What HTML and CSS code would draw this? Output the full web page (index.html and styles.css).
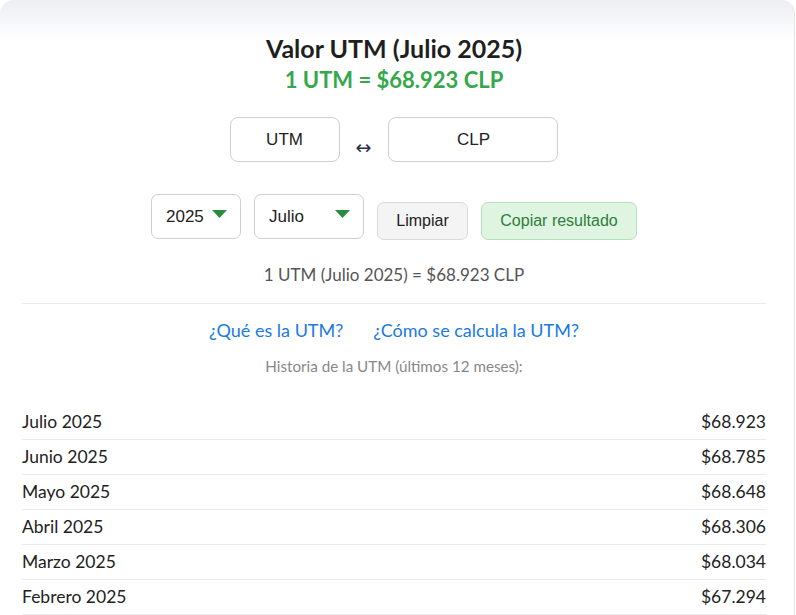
FILE: index.html
```html
<!DOCTYPE html>
<html lang="es">
<head>
<meta charset="utf-8">
<title>Valor UTM</title>
<link rel="stylesheet" href="styles.css">
</head>
<body>
<div class="card">
  <h1 class="title">Valor UTM (Julio 2025)</h1>
  <div class="rate">1 UTM = $68.923 CLP</div>

  <div class="converter">
    <div class="field field-utm">UTM</div>
    <span class="swap">&#8596;</span>
    <div class="field field-clp">CLP</div>
  </div>

  <div class="controls">
    <div class="select select-year"><span>2025</span><svg class="caret" width="15" height="8" viewBox="0 0 15 8"><path d="M0 0H15L7.5 8Z" fill="#2a8a3e"/></svg></div>
    <div class="select select-month"><span>Julio</span><svg class="caret" width="15" height="8" viewBox="0 0 15 8"><path d="M0 0H15L7.5 8Z" fill="#2a8a3e"/></svg></div>
    <button class="btn btn-clear">Limpiar</button>
    <button class="btn btn-copy">Copiar resultado</button>
  </div>

  <div class="result">1 UTM (Julio 2025) = $68.923 CLP</div>
  <hr class="divider">

  <div class="links">
    <a href="#" class="link">¿Qué es la UTM?</a>
    <a href="#" class="link">¿Cómo se calcula la UTM?</a>
  </div>
  <div class="history-title">Historia de la UTM (últimos 12 meses):</div>

  <ul class="history">
    <li class="row"><span>Julio 2025</span><span>$68.923</span></li>
    <li class="row"><span>Junio 2025</span><span>$68.785</span></li>
    <li class="row"><span>Mayo 2025</span><span>$68.648</span></li>
    <li class="row"><span>Abril 2025</span><span>$68.306</span></li>
    <li class="row"><span>Marzo 2025</span><span>$68.034</span></li>
    <li class="row"><span>Febrero 2025</span><span>$67.294</span></li>
  </ul>
</div>
</body>
</html>
```

FILE: styles.css
```css
html, body {
  margin: 0;
  padding: 0;
  background: #ffffff;
  overflow: hidden;
}

body {
  font-family: Lato, "Noto Sans", sans-serif;
  color: #222;
}

.card {
  width: 795px;
  box-sizing: border-box;
  padding: 33px 28px 0 22px;
  background: linear-gradient(to bottom, #eceef2 0, #ffffff 40px);
  border-radius: 14px 14px 0 0;
  border-right: 1px solid #e6e6e6;
  min-height: 615px;
}

.title {
  margin: 0;
  text-align: center;
  font-size: 25px;
  font-weight: 700;
  line-height: 30px;
  color: #1f1f1f;
}

.rate {
  margin-top: 2px;
  text-align: center;
  font-size: 22px;
  font-weight: 700;
  line-height: 30px;
  color: #34a84a;
}

.converter {
  margin-top: 22px;
  display: flex;
  justify-content: center;
  align-items: flex-end;
  gap: 16px;
}

.field {
  height: 45px;
  box-sizing: border-box;
  border: 1px solid #cfcfcf;
  border-radius: 8px;
  display: flex;
  align-items: center;
  justify-content: center;
  font-family: "Liberation Sans", Arial, sans-serif;
  font-size: 17px;
  color: #222;
}

.field-utm { width: 110px; }
.field-clp { width: 170px; }

.swap {
  font-family: "DejaVu Sans", sans-serif;
  font-size: 19px;
  line-height: 20px;
  margin-bottom: 5px;
  padding-right: 1px;
  color: #2a2f45;
}

.controls {
  margin-top: 32px;
  display: flex;
  justify-content: center;
  align-items: flex-end;
  gap: 13px;
}

.select {
  height: 45px;
  box-sizing: border-box;
  border: 1px solid #cfcfcf;
  border-radius: 7px;
  padding: 0 13px 0 14px;
  display: flex;
  align-items: center;
  justify-content: space-between;
  font-family: "Liberation Sans", Arial, sans-serif;
  font-size: 17px;
  color: #222;
}

.select .caret { margin-top: -5px; }

.select-year { width: 90px; }
.select-month { width: 110px; }

.btn {
  height: 38px;
  box-sizing: border-box;
  border-radius: 7px;
  padding: 0;
  white-space: nowrap;
  font-family: "Liberation Sans", Arial, sans-serif;
  font-size: 16px;
  margin-bottom: -1px;
}

.btn-clear {
  width: 91px;
  background: #f4f4f4;
  border: 1px solid #dadada;
  color: #222;
}

.btn-copy {
  width: 156px;
  background: #dff5e1;
  border: 1px solid #b3e1bb;
  color: #2e7d3a;
}

.result {
  margin-top: 24px;
  text-align: center;
  font-size: 17px;
  line-height: 24px;
  color: #555;
}

.divider {
  margin: 16px 0 0;
  border: 0;
  border-top: 1px solid #ebebeb;
}

.links {
  margin-top: 14px;
  display: flex;
  justify-content: center;
  gap: 30px;
}

.link {
  font-size: 18px;
  line-height: 24px;
  color: #1a7ae0;
  text-decoration: none;
}

.history-title {
  margin-top: 14px;
  text-align: center;
  font-size: 15.2px;
  line-height: 20px;
  color: #888;
}

.history {
  list-style: none;
  margin: 29px 0 0;
  padding: 0;
}

.row {
  display: flex;
  justify-content: space-between;
  font-size: 17.5px;
  line-height: 20px;
  padding: 7px 0 7px;
  border-bottom: 1px solid #ebebeb;
  color: #222;
}
```
